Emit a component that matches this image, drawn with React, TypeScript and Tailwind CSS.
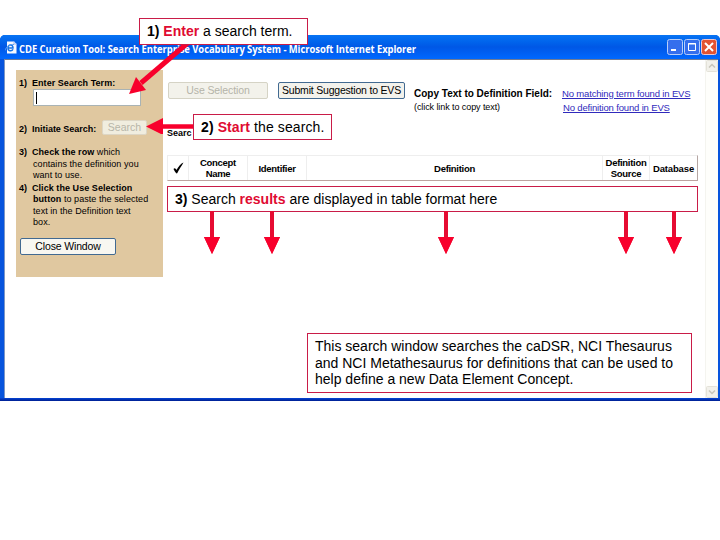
import type { ReactNode } from "react";

const RED = "#f8002c";

function DownArrow({ place }: { place: string }) {
  return (
    <svg className={`absolute top-[211px] ${place}`} width="18" height="44" viewBox="0 0 18 44">
      <path d="M7 0h4v26h6L9 43 1 26h6z" fill="#e60c32" />
      <path d="M1 26h16L9 43z" fill={RED} />
    </svg>
  );
}

function Callout({ place, children }: { place: string; children: ReactNode }) {
  return (
    <div className={`absolute border border-[#c91c48] bg-white whitespace-nowrap text-[14px] ${place}`}>
      {children}
    </div>
  );
}

function TitleBar() {
  return (
    <div className="flex h-[24px] items-center rounded-t-[5px] bg-linear-to-b from-[#0874f4] via-[#0057e6] to-[#0068ff] pl-[5px] pr-[3px]">
      <svg width="12" height="13" viewBox="0 0 12 13">
        <path d="M2 .5h7l2.500 2.500v9.500H2z" fill="#f7f9ff" />
        <path d="M9 .5V3h2.500" fill="none" stroke="#9ebaf0" />
        <path d="M3 7h5c.2-4-5-4-5 0 0 3.500 4 3.500 5 1.300" fill="none" stroke="#1674e8" strokeWidth="1.500" />
        <path d="M0 9.500C1 6 5 3 9 3.500" fill="none" stroke="#5ca1f0" />
      </svg>
      <span className="mt-[3px] ml-[2px] w-[397px] origin-left scale-x-[0.896] whitespace-nowrap font-['Open_Sans',sans-serif] text-[10.500px] leading-[14px] font-bold tracking-[-0.04px] text-white">
        CDE Curation Tool: Search Enterprise Vocabulary System - Microsoft Internet Explorer
      </span>
      <div className="ml-auto flex gap-[1px]">
        <svg width="16" height="16" viewBox="0 0 16 16">
          <rect x=".5" y=".5" width="15" height="15" rx="2" fill="#356eed" stroke="#b9cef9" />
          <path d="M4 11h5" stroke="white" strokeWidth="2" />
        </svg>
        <svg width="16" height="16" viewBox="0 0 16 16">
          <rect x=".5" y=".5" width="15" height="15" rx="2" fill="#356eed" stroke="#b9cef9" />
          <path d="M4.500 4.500h7v7h-7zM4 5h8" fill="none" stroke="white" />
        </svg>
        <svg width="16" height="16" viewBox="0 0 16 16">
          <rect x=".5" y=".5" width="15" height="15" rx="2" fill="#e35332" stroke="#f0c6cc" />
          <path d="M4 4l8 8m0-8l-8 8" stroke="white" strokeWidth="2" />
        </svg>
      </div>
    </div>
  );
}

function Instructions() {
  return (
    <div className="mt-[10px] ml-[11px] h-[207px] w-[147px] shrink-0 bg-[#e0c8a0] pl-[3px] text-[9px] leading-[11.300px] tracking-[0.06px]">
      <div className="flex pt-[8px] font-bold">
        <span className="w-[13px]">1)</span>
        <span className="tracking-[0.05px]">Enter Search Term:</span>
      </div>
      <div className="ml-[14px] flex h-[17px] w-[108px] items-center border border-[#a9b3b5] bg-white pl-[2px]">
        <i className="h-[12px] w-px bg-black" />
      </div>
      <div className="mt-[12px] flex h-[18px] items-center font-bold">
        <span className="w-[13px] pt-[4px]">2)</span>
        <span className="w-[70px] pt-[4px] whitespace-nowrap tracking-[-0.02px]">Initiate Search:</span>
        <span className="flex h-[15px] w-[45px] items-center justify-center rounded-xs border border-[#ddd6c5] bg-[#f0eddf] text-[10.500px] font-normal tracking-normal text-[#b7b5a8]">Search</span>
      </div>
      <div className="mt-[11px] ml-[14px] whitespace-nowrap">
        <div className="-ml-[14px] flex">
          <b className="w-[13px]">3)</b>
          <span><b>Check the row</b> which</span>
        </div>
        <div>contains the definition you</div>
        <div>want to use.</div>
      </div>
      <div className="mt-[2px] ml-[14px] whitespace-nowrap">
        <div className="-ml-[14px] flex font-bold">
          <span className="w-[13px]">4)</span>
          <span>Click the Use Selection</span>
        </div>
        <div><b>button</b> to paste the selected</div>
        <div>text in the Definition text</div>
        <div>box.</div>
      </div>
      <button className="mt-[10px] ml-px flex h-[17px] w-[96px] items-center justify-center rounded-xs border border-[#426a91] bg-[#f8f7f1] text-[10.500px] tracking-[-0.150px]">
        Close Window
      </button>
    </div>
  );
}

function Results() {
  return (
    <div className="ml-[4px] flex w-[531px] shrink-0 flex-col">
      <div className="mt-[22px] flex h-[34px] items-start">
        <button className="ml-px h-[17px] w-[100px] rounded-xs border border-[#d5d3c5] bg-[#f3f2eb] text-[10.500px] leading-[15px] tracking-[-0.100px] text-[#b5b4a9]">Use Selection</button>
        <button className="ml-[10px] h-[17px] w-[127px] rounded-xs border border-[#426a91] bg-[#f3f2ec] text-[10.500px] leading-[15px] tracking-[-0.200px] whitespace-nowrap">Submit Suggestion to EVS</button>
        <div className="mt-[5px] ml-[9px] w-[148px] whitespace-nowrap">
          <div className="text-[10px] leading-[14px] font-bold">Copy Text to Definition Field:</div>
          <div className="text-[9px] leading-[13px] tracking-[-0.080px]">(click link to copy text)</div>
        </div>
        <div className="mt-[5px] whitespace-nowrap text-[9.500px] leading-[14px] tracking-[-0.160px] text-[#302abc] underline">
          <div>No matching term found in EVS</div>
          <div className="ml-px leading-[13px]">No definition found in EVS</div>
        </div>
      </div>
      <div className="mt-[11px] text-[9px] leading-[12px] font-bold">Searc</div>
      <div className="mt-[16px] grid h-[26px] shrink-0 grid-cols-[21px_59px_59px_296px_47px_47px] border border-t-[#eee] border-r-[#b5a6a3] border-b-[#bca3a0] border-l-[#eee] text-center text-[9.500px] leading-[11px] font-bold tracking-[-0.300px] *:flex *:items-center *:justify-center *:border-r *:border-[#eee]">
        <div>
          <svg width="11" height="12" viewBox="0 0 11 12">
            <path d="M.5 7C1.500 5.500 2.700 6.500 3.500 8 5.500 4.500 8 1.500 10.500.5 8.500 4 6 7.500 4.200 11.300 3.500 11.800 2.800 11.300.5 7z" />
          </svg>
        </div>
        <div>Concept<br />Name</div>
        <div>Identifier</div>
        <div>Definition</div>
        <div>Definition<br />Source</div>
        <div className="border-r-0! tracking-[-0.150px]">Database</div>
      </div>
    </div>
  );
}

function ScrollButton({ down = false }: { down?: boolean }) {
  return (
    <svg className={down ? "rotate-180" : ""} width="12" height="12" viewBox="0 0 12 12">
      <rect x=".5" y=".5" width="11" height="11" rx="1" fill="#f2f1eb" stroke="#e4e2d9" />
      <path d="M3 7.500l3-3 3 3" fill="none" stroke="#c7c5bb" strokeWidth="1.500" />
    </svg>
  );
}

export default function App() {
  return (
    <div className="relative h-[540px] w-[720px] overflow-hidden bg-white pt-[35px] font-['Liberation_Sans',Arial,sans-serif] text-black">
      <div className="flex h-[366px] flex-col rounded-t-[5px] bg-[#0754dd]">
        <TitleBar />
        <div className="mr-[2px] mb-[3px] ml-[4px] flex min-h-0 flex-1 border-t border-l border-t-[#727b93] border-l-[#7c96c5] bg-white">
          <Instructions />
          <Results />
          <div className="ml-auto flex w-[13px] flex-col items-center justify-between border-l border-[#f4f4ef] bg-[#fefefb]">
            <ScrollButton />
            <ScrollButton down />
          </div>
        </div>
      </div>
      <div className="absolute top-[398px] left-0 h-[3px] w-full bg-linear-to-b from-[#0645d6] to-[#001e91]" />

      <svg className="absolute top-[34px] left-[120px]" width="80" height="100" viewBox="0 0 80 100">
        <path d="M70 7L21 49" stroke={RED} strokeWidth="5" />
        <path d="M9 60L16 43 26 56z" fill={RED} />
        <path d="M74 92.500H40" stroke={RED} strokeWidth="4.500" />
        <path d="M26 92.500L43 84v17z" fill={RED} />
      </svg>
      <Callout place="top-[18px] left-[139px] h-[27px] w-[169px] pl-[7px] leading-[25px]">
        <b>1) <span className="text-[#df0b32]">Enter</span></b> a search term.
      </Callout>
      <Callout place="top-[114px] left-[193px] h-[26px] w-[139px] pl-[7px] leading-[25px] tracking-[0.1px]">
        <b>2) <span className="text-[#df0b32]">Start</span></b> the search.
      </Callout>
      <Callout place="top-[186px] left-[167px] h-[26px] w-[531px] pl-[7px] leading-[25px]">
        <b>3)</b> Search <b className="text-[#df0b32]">results</b> are displayed in table format here
      </Callout>
      <DownArrow place="left-[203px]" />
      <DownArrow place="left-[263px]" />
      <DownArrow place="left-[437px]" />
      <DownArrow place="left-[617px]" />
      <DownArrow place="left-[665px]" />
      <Callout place="top-[333px] left-[307px] h-[60px] w-[385px] pt-[4px] pl-[7px] leading-[16.500px]">
        This search window searches the caDSR, NCI Thesaurus<br />
        and NCI Metathesaurus for definitions that can be used to<br />
        help define a new Data Element Concept.
      </Callout>
    </div>
  );
}
